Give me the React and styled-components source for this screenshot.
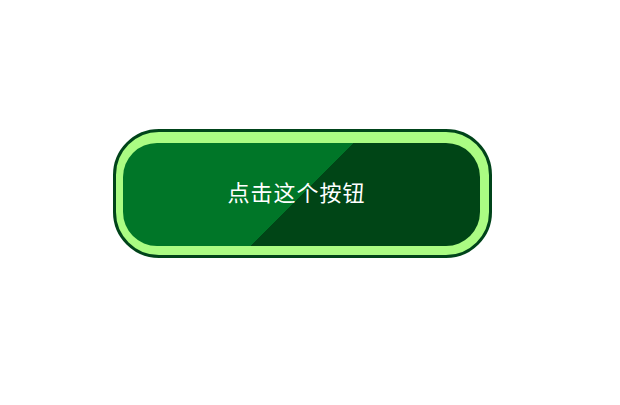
import React from 'react';
import styled, { createGlobalStyle } from 'styled-components';

const GlobalStyle = createGlobalStyle`
    html, body {
        margin: 0;
        padding: 0;
        background: #ffffff;
    }
    body {
        font-family: "Noto Sans CJK SC", "Noto Sans", sans-serif;
    }
`;

const Page = styled.div`
    width: 620px;
    height: 405px;
    box-sizing: border-box;
    padding: 129px 0 0 113px;
    display: flex;
    align-items: flex-start;
`;

const Frame = styled.button`
    width: 379px;
    height: 129px;
    box-sizing: border-box;
    display: flex;
    padding: 11px 9px 9px 7px;
    border: 3px solid #00441a;
    border-radius: 46px;
    background: #abfc83;
    cursor: pointer;
    font: inherit;
`;

const Face = styled.div`
    flex: 1;
    display: flex;
    align-items: center;
    justify-content: center;
    border-radius: 34px;
    background: linear-gradient(135deg, #007628 50%, #004516 50%);
    color: #ffffff;
    font-size: 22px;
    line-height: 1;
    padding: 0 10px 7px 0;
    letter-spacing: 1px;
`;

export default function App() {
    return (
        <>
            <GlobalStyle />
            <Page>
                <Frame>
                    <Face>点击这个按钮</Face>
                </Frame>
            </Page>
        </>
    );
}
